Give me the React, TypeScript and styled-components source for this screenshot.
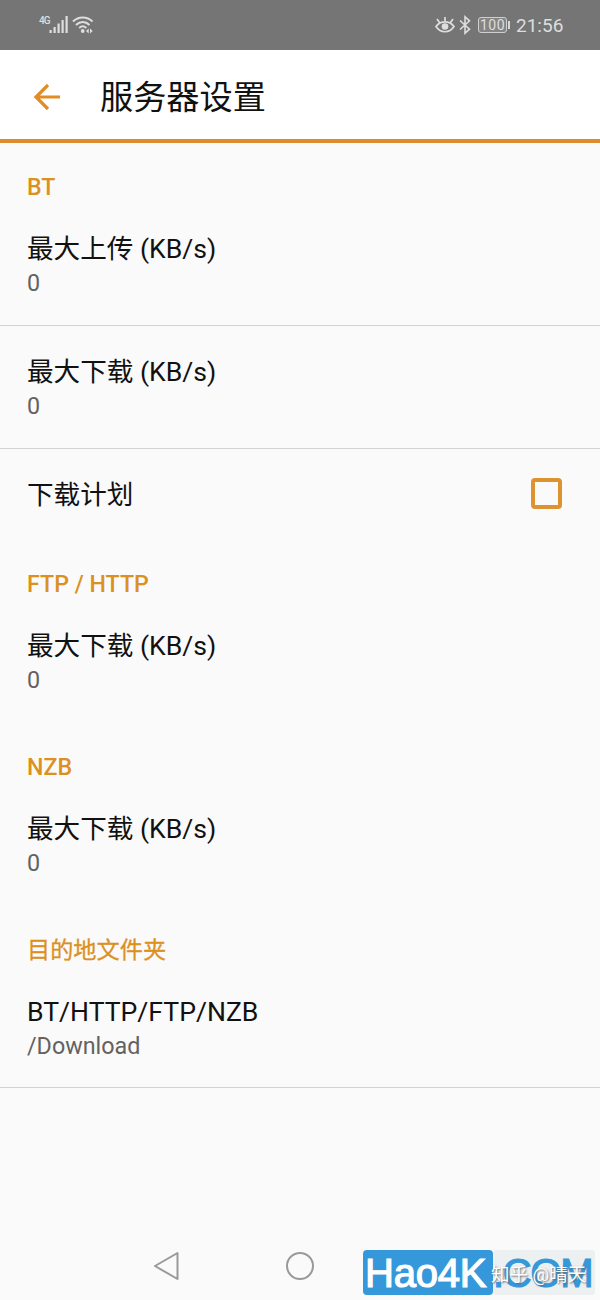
import React from 'react';
import styled, { createGlobalStyle } from 'styled-components';

const Global = createGlobalStyle`
  * { box-sizing: border-box; }
  body { margin: 0; background: #fafafa; font-family: Roboto, "Noto Sans CJK SC", sans-serif; }
`;

const Screen = styled.div`
  position: relative;
  width: 600px;
  height: 1300px;
  overflow: hidden;
  display: flex;
  flex-direction: column;
  background: #fafafa;
`;

const StatusBar = styled.div`
  height: 50px;
  flex: none;
  display: flex;
  align-items: center;
  justify-content: space-between;
  padding: 0 37px 0 39px;
  background: #757575;
  color: #dedede;
`;

const StatusGroup = styled.div`
  display: flex;
  align-items: center;
  height: 50px;
`;

const Network = styled.span`
  font-size: 10px;
  line-height: 12px;
  width: 10px;
  height: 20px;
  letter-spacing: -1px;
  font-weight: 500;
`;

const BatteryBody = styled.span`
  width: 29px;
  height: 16px;
  margin-left: 7px;
  border: 1px solid #cfcfcf;
  border-radius: 3px;
  background: #858585;
  font-size: 14px;
  line-height: 14px;
  letter-spacing: 0.4px;
  text-align: center;
`;

const BatteryTip = styled.span`
  width: 2px;
  height: 8px;
  margin-left: 1px;
  background: #d8d8d8;
`;

const Clock = styled.span`
  width: 47px;
  margin-left: 6px;
  padding-top: 1px;
  font-size: 19px;
  line-height: 24px;
  white-space: nowrap;
`;

const Header = styled.header`
  height: 93px;
  flex: none;
  display: flex;
  align-items: center;
  padding: 4px 0 0 32px;
  gap: 38px;
  background: #fff;
  border-bottom: 4px solid #dd8c2c;
`;

const PageTitle = styled.h1`
  margin: 0;
  padding-top: 2px;
  font-size: 33.2px;
  line-height: 48px;
  font-weight: 400;
  color: #111;
`;

const Heading = styled.h2`
  height: 60px;
  margin: 0;
  padding: 30px 27px 0;
  font-size: 23.2px;
  line-height: 28px;
  font-weight: 500;
  color: #dc911f;
`;

const HanHeading = styled(Heading)`
  padding-top: 28px;
  font-family: "Noto Sans CJK SC", sans-serif;
  font-weight: 400;
  -webkit-text-stroke: 0.3px #dc911f;
`;

const Setting = styled.div<{ $divider?: boolean }>`
  height: 123px;
  padding: 29px 27px 0;
  border-bottom: 1px solid ${(p) => (p.$divider ? '#d2d2d2' : 'transparent')};

  &:last-child {
    height: 122px;
  }
`;

const Label = styled.div`
  font-size: 26.6px;
  line-height: 34px;
  height: 34px;
  color: #111;
  white-space: nowrap;
`;

const Value = styled.div`
  font-size: 23.3px;
  line-height: 34px;
  color: #626262;
`;

const ToggleSetting = styled.div`
  height: 91px;
  display: flex;
  align-items: flex-start;
  justify-content: space-between;
  padding: 29px 38px 0 27px;
`;

const Checkbox = styled.span`
  width: 31px;
  height: 31px;
  border: 4px solid #dd9330;
  border-radius: 4px;
`;

const NavBar = styled.nav`
  margin-top: auto;
  height: 68px;
  display: flex;
  align-items: center;
  padding-left: 153px;
  gap: 104px;
`;

const Brand = styled.div`
  position: absolute;
  left: 363px;
  top: 1250px;
  display: flex;
  height: 45px;
  font-family: "Liberation Sans", sans-serif;
  line-height: 46px;
  white-space: nowrap;
`;

const BrandName = styled.span`
  width: 130px;
  padding-left: 2px;
  border-radius: 4px;
  background: #3498db;
  color: #fff;
  font-size: 40px;
  letter-spacing: -0.2px;
  -webkit-text-stroke: 1.2px #fff;
`;

const BrandDomain = styled.span`
  width: 102px;
  border-radius: 4px;
  background: #ecf0f1;
  color: #3498db;
  font-size: 40px;
  letter-spacing: -1.3px;
  -webkit-text-stroke: 1.2px #3498db;
`;

const Credit = styled.span`
  position: absolute;
  left: 128px;
  top: 10px;
  font: 18.5px/30px Roboto, "Noto Sans CJK SC", sans-serif;
  color: #fff;
  text-shadow: 1px 1px 2px #666;
`;

const SignalIcon = () => (
  <svg width="19" height="18" viewBox="0 0 19 18" fill="#dedede">
    <rect x="0.500" y="14" width="2.200" height="3" />
    <rect x="4.500" y="11" width="2.200" height="6" />
    <rect x="8.500" y="7.500" width="2.200" height="9.500" />
    <rect x="12.500" y="4" width="2.200" height="13" />
    <rect x="16.500" y="0" width="2.200" height="17" />
  </svg>
);

const WifiGlyph = styled.svg`
  margin-left: 4px;
`;

const WifiIcon = () => (
  <WifiGlyph width="22" height="18" viewBox="0 0 22 18" fill="none" stroke="#dedede" strokeWidth="2">
    <path d="M1 5.500C6.500 .1 15 .1 20.500 5.500M4 9C8 5 13.500 5 17.500 9M7.200 12C9.500 9.800 12 9.800 14.300 12" />
    <circle cx="10.700" cy="15" r="1.900" fill="#dedede" stroke="none" />
    <path d="M16.700 12.500v5l-2.700-2.500zM18 12.500v5l2.700-2.500z" fill="#dedede" stroke="none" />
  </WifiGlyph>
);

const EyeIcon = () => (
  <svg width="20" height="18" viewBox="0 0 20 18" fill="none" stroke="#dedede" strokeWidth="1.700">
    <path d="M1 10.500C5.500 4.200 14.500 4.200 19 10.500C14.500 17.500 5.500 17.500 1 10.500ZM10 5.500V1M4.500 6.500L2 3M15.500 6.500L18 3" />
    <circle cx="10" cy="10.500" r="3.300" fill="#dedede" stroke="none" />
  </svg>
);

const BluetoothGlyph = styled.svg`
  margin-left: 4px;
`;

const BluetoothIcon = () => (
  <BluetoothGlyph width="12" height="20" viewBox="0 0 12 20" fill="none" stroke="#dedede" strokeWidth="1.600">
    <path d="M1 5.500L10.500 14.200L6 18.200V1.800L10.500 5.800L1 14.500" />
  </BluetoothGlyph>
);

const BackArrow = () => (
  <svg width="30" height="30" viewBox="0 0 30 30" fill="none" stroke="#e18c24" strokeWidth="3.200">
    <path d="M28 15H4M16 3L4 15L16 27" />
  </svg>
);

const groups = [
  { title: 'FTP / HTTP', label: '最大下载 (KB/s)' },
  { title: 'NZB', label: '最大下载 (KB/s)' },
];

export default function App() {
  return (
    <Screen>
      <Global />
      <StatusBar>
        <StatusGroup>
          <Network>4G</Network>
          <SignalIcon />
          <WifiIcon />
        </StatusGroup>
        <StatusGroup>
          <EyeIcon />
          <BluetoothIcon />
          <BatteryBody>100</BatteryBody>
          <BatteryTip />
          <Clock>21:56</Clock>
        </StatusGroup>
      </StatusBar>
      <Header>
        <BackArrow />
        <PageTitle>服务器设置</PageTitle>
      </Header>
      <main>
        <Heading>BT</Heading>
        <Setting $divider>
          <Label>最大上传 (KB/s)</Label>
          <Value>0</Value>
        </Setting>
        <Setting $divider>
          <Label>最大下载 (KB/s)</Label>
          <Value>0</Value>
        </Setting>
        <ToggleSetting>
          <Label>下载计划</Label>
          <Checkbox />
        </ToggleSetting>
        {groups.map((g) => (
          <React.Fragment key={g.title}>
            <Heading>{g.title}</Heading>
            <Setting>
              <Label>{g.label}</Label>
              <Value>0</Value>
            </Setting>
          </React.Fragment>
        ))}
        <HanHeading>目的地文件夹</HanHeading>
        <Setting $divider>
          <Label>BT/HTTP/FTP/NZB</Label>
          <Value>/Download</Value>
        </Setting>
      </main>
      <NavBar>
        <svg width="28" height="30" viewBox="0 0 28 30" fill="none" stroke="#999" strokeWidth="2" strokeLinejoin="round">
          <path d="M2 15L24.500 2V28Z" />
        </svg>
        <svg width="30" height="30" viewBox="0 0 30 30" fill="none" stroke="#999" strokeWidth="2">
          <circle cx="15" cy="15" r="13" />
        </svg>
      </NavBar>
      <Brand>
        <BrandName>Hao4K</BrandName>
        <BrandDomain>.COM</BrandDomain>
        <Credit>知乎 @晴天</Credit>
      </Brand>
    </Screen>
  );
}
